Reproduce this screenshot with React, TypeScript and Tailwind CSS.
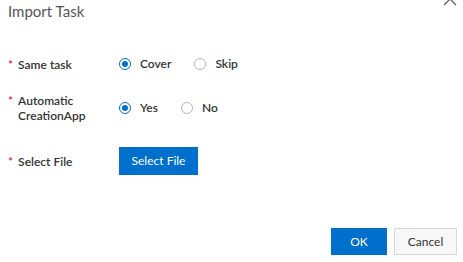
import { ReactNode } from "react";

interface RadioOption {
  label: string;
  checked?: boolean;
}

function Radio({ label, checked }: RadioOption) {
  return (
    <label className="flex items-center gap-[9px]">
      <span
        className={
          checked
            ? "flex h-[12px] w-[12px] items-center justify-center rounded-full border border-[#0070cc] bg-white"
            : "flex h-[12px] w-[12px] items-center justify-center rounded-full border border-[#b3b3b3] bg-white"
        }
      >
        {checked && <span className="h-[6px] w-[6px] rounded-full bg-[#0070cc]" />}
      </span>
      <span className="text-[12px] font-semibold text-[#333]">{label}</span>
    </label>
  );
}

function FormRow({ label, children, className }: { label: ReactNode; children: ReactNode; className?: string }) {
  return (
    <div className={`flex items-center ${className ?? ""}`}>
      <div className="flex w-[111px] items-start text-[12px] font-semibold leading-[15px] text-[#333]">
        <span className="mr-[5px] text-[#d93026]">*</span>
        <span>{label}</span>
      </div>
      {children}
    </div>
  );
}

export default function App() {
  return (
    <div
      className="relative h-[262px] w-[463px] overflow-hidden bg-white"
      style={{ fontFamily: "Lato, 'Noto Sans', sans-serif" }}
    >
      <button className="absolute right-[6px] top-[-8px] text-[#666]">
        <svg width="14" height="14" viewBox="0 0 14 14" fill="none" stroke="currentColor" strokeWidth="1.4">
          <path d="M1 1 L13 13 M13 1 L1 13" />
        </svg>
      </button>

      <div className="pl-[8px] pt-[1px] text-[15px] leading-[20px] text-[#555]">Import Task</div>

      <div className="pl-[8px]">
        <FormRow label="Same task" className="mt-[33px] h-[20px]">
          <div className="flex gap-[23px]">
            <Radio label="Cover" checked />
            <Radio label="Skip" />
          </div>
        </FormRow>

        <FormRow
          label={
            <>
              Automatic
              <br />
              CreationApp
            </>
          }
          className="mt-[19px] h-[30px]"
        >
          <div className="flex gap-[23px]">
            <Radio label="Yes" checked />
            <Radio label="No" />
          </div>
        </FormRow>

        <FormRow label="Select File" className="mt-[24px] h-[28px]">
          <button className="h-[28px] w-[79px] bg-[#0070cc] text-[12px] text-white">Select File</button>
        </FormRow>
      </div>

      <div className="absolute bottom-[7px] right-[6px] flex gap-[7px]">
        <button className="h-[27px] w-[56px] bg-[#0070cc] text-[12px] text-white">OK</button>
        <button className="h-[27px] w-[63px] border border-[#d7d7d7] bg-[#f7f7f7] text-[12px] text-[#333]">
          Cancel
        </button>
      </div>
    </div>
  );
}
